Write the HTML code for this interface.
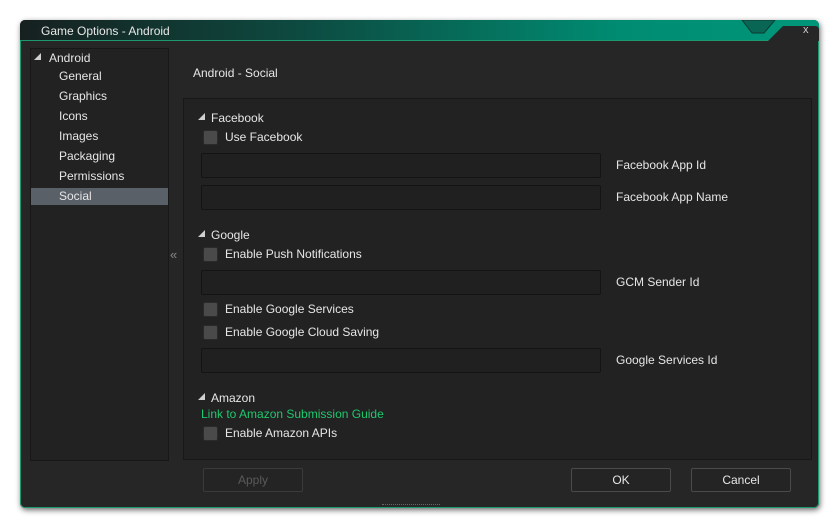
<!DOCTYPE html>
<html><head><style>
body{margin:0;width:840px;height:529px;background:#fff;font-family:"Liberation Sans",sans-serif;font-size:12px;color:#e6e6e6;position:relative;overflow:hidden}
.a{position:absolute}
.win{left:20px;top:20px;width:799px;height:488px;background:#262626;border-radius:5px;box-shadow:1px 2px 6px rgba(0,0,0,.6);overflow:hidden}
.title{left:0;top:0;width:799px;height:20px;background:linear-gradient(90deg,#16201f 0%,#0d4a40 35%,#008c72 75%,#00967a 100%)}
.body{left:0;top:20px;width:797px;height:466px;border:1px solid #1c9a6e;border-radius:0 0 5px 5px;background:#262626}
.side{left:30px;top:48px;width:137px;height:411px;background:#222;border:1px solid #181818}
.panel{left:183px;top:98px;width:627px;height:360px;background:#222;border:1px solid #181818}
.t{position:absolute;white-space:nowrap}
.inp{position:absolute;left:201px;width:398px;height:23px;background:#202020;border:1px solid #141414;border-radius:2px}
.cb{position:absolute;left:203px;width:13px;height:13px;background:#4a4a4a;border:1px solid #2a2a2a;border-radius:2px}
.tri{position:absolute;width:0;height:0;border-left:7px solid transparent;border-bottom:7px solid #cfcfcf}
.btn{position:absolute;top:468px;width:98px;height:22px;border:1px solid #4a4a4a;border-radius:2px;background:#242424;text-align:center;line-height:22px}
</style></head><body>
<div class="a win">
<div class="a title"></div>
<div class="a body"></div>
</div>
<div class="t" style="left:41px;top:24px;color:#e8e8e8">Game Options - Android</div>
<svg class="a" style="left:735px;top:20px" width="84" height="21"><path d="M7 0 L17 13 L29 13 L40 0 Z" fill="#0a6654" stroke="#0c3a32"/><path d="M33 21 L48 6 L80 6 Q84 6 84 10 L84 21Z" fill="#262626"/></svg>
<div class="t" style="left:803px;top:24px;color:#ccc;font-size:11px">x</div>
<div class="a side"></div>
<div class="tri" style="left:34px;top:53px"></div>
<div class="t" style="left:49px;top:51px">Android</div>
<div class="t" style="left:59px;top:69px">General</div>
<div class="t" style="left:59px;top:89px">Graphics</div>
<div class="t" style="left:59px;top:109px">Icons</div>
<div class="t" style="left:59px;top:129px">Images</div>
<div class="t" style="left:59px;top:149px">Packaging</div>
<div class="t" style="left:59px;top:169px">Permissions</div>
<div class="a" style="left:31px;top:188px;width:137px;height:17px;background:#5a6068"></div>
<div class="t" style="left:59px;top:189px">Social</div>
<div class="t" style="left:170px;top:247px;color:#888;font-size:13px">«</div>
<div class="t" style="left:193px;top:66px">Android - Social</div>
<div class="a panel"></div>
<div class="tri" style="left:198px;top:113px"></div>
<div class="t" style="left:211px;top:111px">Facebook</div>
<div class="cb" style="top:130px"></div><div class="t" style="left:225px;top:130px">Use Facebook</div>
<div class="inp" style="top:153px"></div><div class="t" style="left:616px;top:158px">Facebook App Id</div>
<div class="inp" style="top:185px"></div><div class="t" style="left:616px;top:190px">Facebook App Name</div>
<div class="tri" style="left:198px;top:230px"></div>
<div class="t" style="left:211px;top:228px">Google</div>
<div class="cb" style="top:247px"></div><div class="t" style="left:225px;top:247px">Enable Push Notifications</div>
<div class="inp" style="top:270px"></div><div class="t" style="left:616px;top:275px">GCM Sender Id</div>
<div class="cb" style="top:302px"></div><div class="t" style="left:225px;top:302px">Enable Google Services</div>
<div class="cb" style="top:325px"></div><div class="t" style="left:225px;top:325px">Enable Google Cloud Saving</div>
<div class="inp" style="top:348px"></div><div class="t" style="left:616px;top:353px">Google Services Id</div>
<div class="tri" style="left:198px;top:393px"></div>
<div class="t" style="left:211px;top:391px">Amazon</div>
<div class="t" style="left:201px;top:407px;color:#1ec86e">Link to Amazon Submission Guide</div>
<div class="cb" style="top:426px"></div><div class="t" style="left:225px;top:426px">Enable Amazon APIs</div>
<div class="btn" style="left:203px;border-color:#3a3a3a;color:#5a5a5a">Apply</div>
<div class="btn" style="left:571px">OK</div>
<div class="btn" style="left:691px">Cancel</div>
<div class="a" style="left:382px;top:504px;width:58px;height:2px;border-top:1px dotted #666"></div>
</body></html>
